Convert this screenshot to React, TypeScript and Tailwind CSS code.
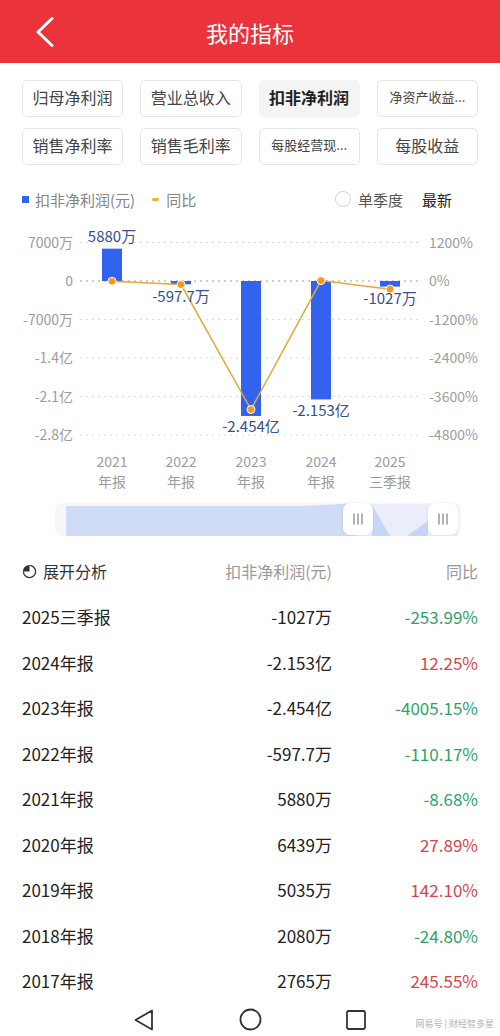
import React from "react"

const tabs = [
  { label: "归母净利润" },
  { label: "营业总收入" },
  { label: "扣非净利润", active: true },
  { label: "净资产收益...", small: true },
  { label: "销售净利率" },
  { label: "销售毛利率" },
  { label: "每股经营现...", small: true },
  { label: "每股收益" },
]

const rows = [
  { period: "2025三季报", value: "-1027万", yoy: "-253.99%", up: false },
  { period: "2024年报", value: "-2.153亿", yoy: "12.25%", up: true },
  { period: "2023年报", value: "-2.454亿", yoy: "-4005.15%", up: false },
  { period: "2022年报", value: "-597.7万", yoy: "-110.17%", up: false },
  { period: "2021年报", value: "5880万", yoy: "-8.68%", up: false },
  { period: "2020年报", value: "6439万", yoy: "27.89%", up: true },
  { period: "2019年报", value: "5035万", yoy: "142.10%", up: true },
  { period: "2018年报", value: "2080万", yoy: "-24.80%", up: false },
  { period: "2017年报", value: "2765万", yoy: "245.55%", up: true },
]

// chart data: value in 万, yoy in %
const bars = [
  { x: 112, v: 5880, pct: -8.68, label: "5880万", ly: 17, year: "2021", kind: "年报" },
  { x: 181, v: -597.7, pct: -110.17, label: "-597.7万", ly: 77, year: "2022", kind: "年报" },
  { x: 251, v: -24540, pct: -4005.15, label: "-2.454亿", ly: 207, year: "2023", kind: "年报" },
  { x: 321, v: -21530, pct: 12.25, label: "-2.153亿", ly: 191, year: "2024", kind: "年报" },
  { x: 390, v: -1027, pct: -253.99, label: "-1027万", ly: 79, year: "2025", kind: "三季报" },
]

const ZERO = 56
const STEP = 38.5
const leftTicks = ["7000万", "0", "-7000万", "-1.4亿", "-2.1亿", "-2.8亿"]
const rightTicks = ["1200%", "0%", "-1200%", "-2400%", "-3600%", "-4800%"]

function Chart() {
  const vy = (v: number) => ZERO - (v / 7000) * STEP
  const py = (p: number) => ZERO - (p / 1200) * STEP
  const line = bars.map((b) => `${b.x},${py(b.pct)}`).join(" ")
  return (
    <svg width="500" height="270" viewBox="0 0 500 270" className="block">
      {leftTicks.map((t, i) => {
        const y = ZERO + (i - 1) * STEP
        return (
          <g key={t}>
            <line x1="80" x2="421" y1={y} y2={y} stroke={i === 1 ? "#9a9a9a" : "#dcdcdc"} strokeWidth="1" strokeDasharray="2 4" />
            <text x="73" y={y + 5} textAnchor="end" fontSize="14" fill="#9c9c9c">
              {t}
            </text>
            <text x="429" y={y + 5} textAnchor="start" fontSize="14" fill="#9c9c9c">
              {rightTicks[i]}
            </text>
          </g>
        )
      })}
      {bars.map((b) => {
        const y = vy(b.v)
        return (
          <rect key={b.year} x={b.x - 10} y={Math.min(y, ZERO)} width="20" height={Math.abs(y - ZERO)} fill="#3163ef" />
        )
      })}
      <polyline points={line} fill="none" stroke="#e9a634" strokeWidth="1.5" />
      {bars.map((b) => (
        <circle key={b.year} cx={b.x} cy={py(b.pct)} r="4" fill="#f39a1e" stroke="#fff" strokeWidth="1" />
      ))}
      {bars.map((b) => (
        <text key={b.year} x={b.x} y={b.ly} textAnchor="middle" fontSize="15" fill="#34508f">
          {b.label}
        </text>
      ))}
      {bars.map((b) => (
        <g key={b.year}>
          <text x={b.x} y="242" textAnchor="middle" fontSize="14" fill="#9c9c9c">
            {b.year}
          </text>
          <text x={b.x} y="262" textAnchor="middle" fontSize="14" fill="#9c9c9c">
            {b.kind}
          </text>
        </g>
      ))}
    </svg>
  )
}

function Slider() {
  return (
    <div className="relative mt-[8px] ml-[55px] h-[33px] w-[406px] rounded-[8px] bg-[#f5f7fb]">
      <svg width="406" height="33" viewBox="0 0 406 33" className="block">
        <path d="M11 3 L245 3 C270 3 285 0 303 1 L303 33 L11 33 Z" fill="#cfdcf6" />
        <rect x="303" y="1" width="100" height="32" fill="#e9eefa" />
        <path d="M317 2 L335 33 L317 33 Z" fill="#c5d7f6" />
        <path d="M352 33 L373 18 L373 33 Z" fill="#c5d7f6" />
      </svg>
      <div className="absolute left-[288px] top-[0px] flex h-[32px] w-[30px] items-center justify-center rounded-[7px] bg-white shadow-[0_0_2px_rgba(0,0,0,0.12)]">
        <Grip />
      </div>
      <div className="absolute left-[373px] top-[0px] flex h-[32px] w-[30px] items-center justify-center rounded-[7px] bg-white shadow-[0_0_2px_rgba(0,0,0,0.12)]">
        <Grip />
      </div>
    </div>
  )
}

function Grip() {
  return (
    <svg width="12" height="12" viewBox="0 0 12 12">
      <path d="M2 0.5 V11.5 M6 0.5 V11.5 M10 0.5 V11.5" stroke="#8a8a8a" strokeWidth="1.3" />
    </svg>
  )
}

export default function App() {
  return (
    <div className="relative h-[1036px] w-[500px] overflow-hidden bg-white font-['Noto_Sans_CJK_SC','Noto_Sans',sans-serif]">
      {/* header */}
      <div className="grid h-[63px] grid-cols-[1fr_auto_1fr] items-center bg-[#ea333b]">
        <div className="pl-[35px]">
          <svg width="20" height="30" viewBox="0 0 20 30">
            <path d="M17 1.5 L3 15 L17 28.5" fill="none" stroke="#fff" strokeWidth="3" strokeLinecap="round" strokeLinejoin="round" />
          </svg>
        </div>
        <div className="text-[22px] leading-none text-white">我的指标</div>
        <div />
      </div>

      {/* metric tabs */}
      <div className="grid grid-cols-4 gap-x-[17px] gap-y-[11px] px-[22px] pt-[17px]">
        {tabs.map((t) => (
          <div
            key={t.label}
            className={
              t.active
                ? "flex h-[37px] items-center justify-center rounded-[5px] bg-[#f4f4f4] pb-[3px] text-[16px] font-bold text-[#222]"
                : t.small
                  ? "flex h-[37px] items-center justify-center rounded-[5px] border border-[#e6e6e6] pb-[3px] text-[13px] text-[#444]"
                  : "flex h-[37px] items-center justify-center rounded-[5px] border border-[#e6e6e6] pb-[3px] text-[16px] text-[#444]"
            }
          >
            {t.label}
          </div>
        ))}
      </div>

      {/* legend */}
      <div className="mt-[18px] flex h-[32px] items-center px-[22px] text-[15px] leading-none">
        <span className="h-[7px] w-[7px] bg-[#3163ef]" />
        <span className="ml-[6px] text-[#858585]">扣非净利润(元)</span>
        <span className="ml-[17px] h-[3px] w-[7px] rounded-full bg-[#f0b030]" />
        <span className="ml-[7px] text-[#858585]">同比</span>
        <span className="ml-auto h-[16px] w-[16px] rounded-full border border-[#d2d2d2]" />
        <span className="ml-[7px] text-[#555]">单季度</span>
        <span className="ml-[19px] mr-[26px] text-[#222]">最新</span>
      </div>

      {/* chart */}
      <div className="mt-[10px]">
        <Chart />
      </div>

      <Slider />

      {/* table */}
      <div className="mt-[12px] flex h-[46px] items-center px-[22px] text-[16px] leading-none">
        <svg width="15" height="15" viewBox="0 0 16 16">
          <path d="M8 1.5 A6.5 6.5 0 1 1 1.5 8" fill="none" stroke="#333" strokeWidth="1.4" />
          <path d="M8 1 A7 7 0 0 0 1 8 L8 8 Z" fill="#333" />
        </svg>
        <span className="ml-[6px] text-[#333]">展开分析</span>
        <span className="ml-auto w-[200px] text-right text-[#999]">扣非净利润(元)</span>
        <span className="w-[146px] text-right text-[#999]">同比</span>
      </div>
      {rows.map((r) => (
        <div key={r.period} className="flex h-[45.5px] items-center px-[22px] text-[17px] leading-none text-[#222]">
          <span>{r.period}</span>
          <span className="ml-auto w-[200px] text-right">{r.value}</span>
          <span className={r.up ? "w-[146px] text-right text-[#d4474b]" : "w-[146px] text-right text-[#2ea36a]"}>{r.yoy}</span>
        </div>
      ))}

      {/* system nav */}
      <div className="flex h-[32px] items-center justify-center gap-[66px]">
        <div className="flex w-[40px] justify-center">
          <svg width="22" height="22" viewBox="0 0 22 22">
            <path d="M19 1.5 V20.5 L2.5 11 Z" fill="none" stroke="#333" strokeWidth="1.8" strokeLinejoin="round" />
          </svg>
        </div>
        <div className="flex w-[40px] justify-center">
          <svg width="23" height="23" viewBox="0 0 23 23">
            <circle cx="11.5" cy="11.5" r="10" fill="none" stroke="#333" strokeWidth="1.8" />
          </svg>
        </div>
        <div className="flex w-[40px] justify-center">
          <svg width="20" height="20" viewBox="0 0 20 20">
            <rect x="1" y="1" width="18" height="18" rx="1.5" fill="none" stroke="#333" strokeWidth="1.8" />
          </svg>
        </div>
      </div>
      <div className="absolute bottom-[8px] right-[6px] text-[9px] leading-none text-[#b5b5b5]">网易号 | 财经智多星</div>
    </div>
  )
}
